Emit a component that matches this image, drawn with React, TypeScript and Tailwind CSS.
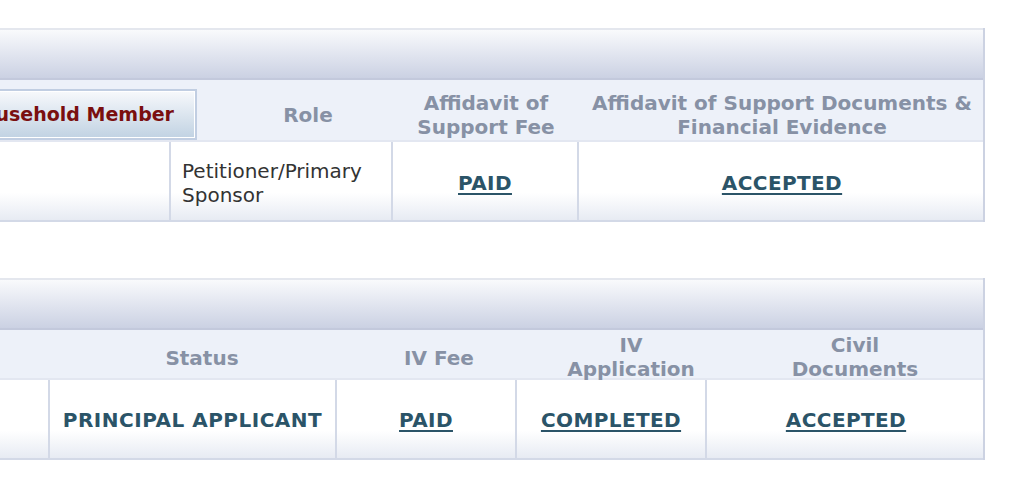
import React from "react";

const font = { fontFamily: '"DejaVu Sans", Verdana, sans-serif' };

function HeaderBar() {
  return (
    <div className="h-[52px] border-t-2 border-[#e4e7ee] border-b-2 border-b-[#c3c9dc] bg-gradient-to-b from-[#f9fafc] to-[#cbd1e3]" />
  );
}

function Link({ children }: { children: React.ReactNode }) {
  return (
    <a className="font-bold text-[#2b5468] underline underline-offset-[3px] decoration-[2px] tracking-[0.4px]">
      {children}
    </a>
  );
}

function HeadText({ children }: { children: React.ReactNode }) {
  return (
    <div className="flex items-center justify-center text-center font-bold text-[#8791a5] leading-[24px]">
      {children}
    </div>
  );
}

export default function App() {
  return (
    <div className="w-[1026px] h-[490px] bg-white overflow-hidden text-[20px]" style={font}>
      <div className="h-[28px]" />
      {/* Table 1 */}
      <div className="w-[985px] border-r-2 border-[#ccd2e2]">
        <HeaderBar />
        <div className="relative z-10 grid grid-cols-[223px_170px_186px_406px] h-[62px] bg-[#edf1f9] border-b-2 border-[#e3e7f1]">
          <div className="flex items-start justify-end pr-[26px] overflow-hidden pt-[9px]">
            <div className="shrink-0 h-[51px] border-2 border-[#c1cee2] p-[1px] bg-white">
              <div className="h-full flex items-center pl-[24px] pr-[20px] bg-gradient-to-b from-[#f6f8fb] to-[#c2d3e3] font-bold text-[19px] text-[#7a0f0f] whitespace-nowrap">
                Household Member
              </div>
            </div>
          </div>
          <HeadText><span className="pt-[10px]">Role</span></HeadText>
          <HeadText><span className="pt-[10px]">Affidavit of<br />Support Fee</span></HeadText>
          <HeadText><span className="pt-[10px]">Affidavit of Support Documents &amp;<br />Financial Evidence</span></HeadText>
        </div>
        <div className="grid grid-cols-[171px_222px_186px_406px] h-[80px] border-b-2 border-[#d3d9e7] bg-gradient-to-b from-white from-[65%] to-[#e7ebf3]">
          <div className="border-r-2 border-[#d3d9e7]" />
          <div className="border-r-2 border-[#d3d9e7] flex items-center pl-[11px] pt-[4px] leading-[24px] text-[#333333]">
            <span>Petitioner/Primary<br />Sponsor</span>
          </div>
          <div className="border-r-2 border-[#d3d9e7] flex items-center justify-center pt-[4px]">
            <Link>PAID</Link>
          </div>
          <div className="flex items-center justify-center pt-[4px]">
            <Link>ACCEPTED</Link>
          </div>
        </div>
      </div>

      <div className="h-[56px]" />

      {/* Table 2 */}
      <div className="w-[985px] border-r-2 border-[#ccd2e2]">
        <HeaderBar />
        <div className="relative z-10 grid grid-cols-[63px_278px_196px_188px_260px] h-[50px] bg-[#edf1f9] border-b-2 border-[#e3e7f1]">
          <div />
          <HeadText><span className="pt-[5px]">Status</span></HeadText>
          <HeadText><span className="pt-[5px]">IV Fee</span></HeadText>
          <HeadText><span className="pt-[3px]">IV<br />Application</span></HeadText>
          <HeadText><span className="pt-[3px]">Civil<br />Documents</span></HeadText>
        </div>
        <div className="grid grid-cols-[50px_287px_180px_190px_278px] h-[80px] border-b-2 border-[#d3d9e7] bg-gradient-to-b from-white from-[65%] to-[#e7ebf3]">
          <div className="border-r-2 border-[#d3d9e7]" />
          <div className="border-r-2 border-[#d3d9e7] flex items-center justify-center pt-[1px] font-bold text-[#2b5468] tracking-[0.5px] whitespace-nowrap">
            PRINCIPAL APPLICANT
          </div>
          <div className="border-r-2 border-[#d3d9e7] flex items-center justify-center pt-[1px]">
            <Link>PAID</Link>
          </div>
          <div className="border-r-2 border-[#d3d9e7] flex items-center justify-center pt-[1px]">
            <Link>COMPLETED</Link>
          </div>
          <div className="flex items-center justify-center pt-[1px]">
            <Link>ACCEPTED</Link>
          </div>
        </div>
      </div>
    </div>
  );
}
